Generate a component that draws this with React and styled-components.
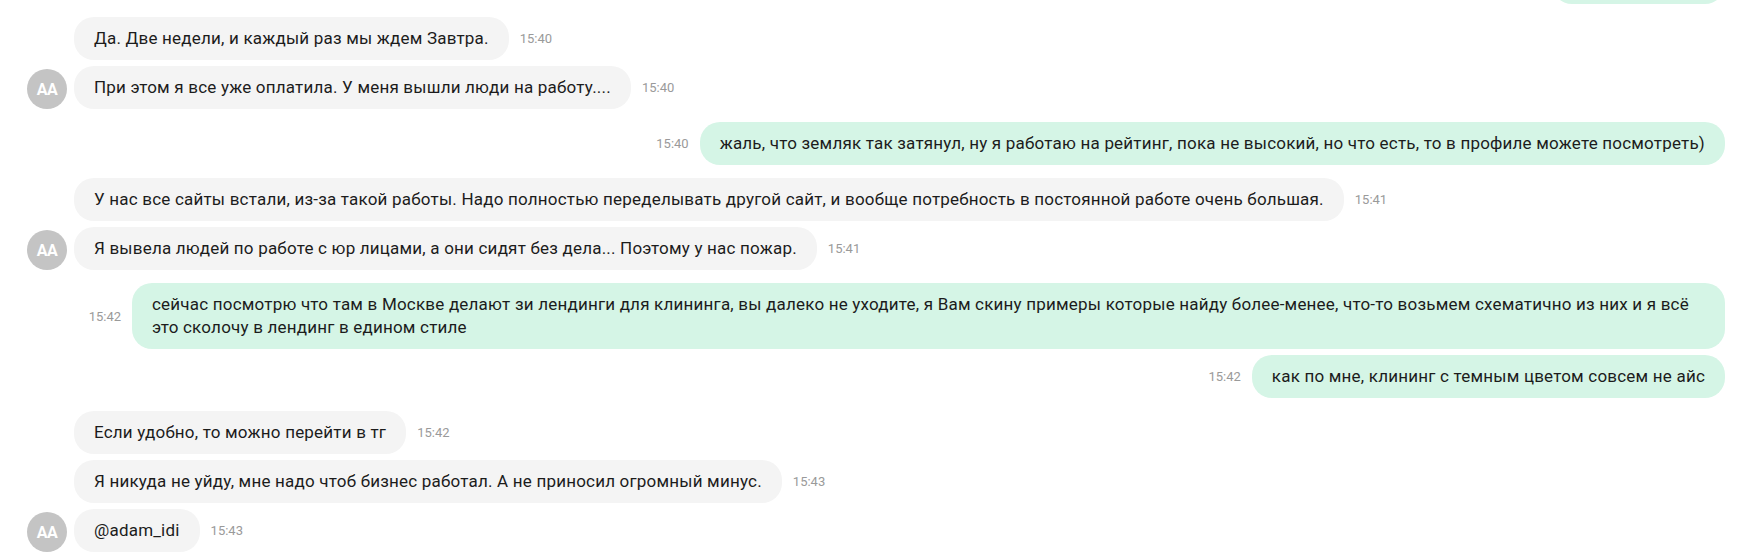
import React from "react";
import styled, { createGlobalStyle } from "styled-components";

const GlobalStyle = createGlobalStyle`
  html, body {
    margin: 0;
    padding: 0;
    background: #ffffff;
  }
  body {
    font-family: Roboto, "Noto Sans", "Liberation Sans", sans-serif;
    color: #1c1c1c;
  }
`;

// first one is the tail of an earlier message, scrolled mostly out of view
const messages = [
  { id: 0, out: true, time: "", text: "", width: 173 },
  { id: 1, time: "15:40", text: "Да. Две недели, и каждый раз мы ждем Завтра." },
  {
    id: 2,
    time: "15:40",
    avatar: true,
    text: "При этом я все уже оплатила. У меня вышли люди на работу....",
  },
  {
    id: 3,
    out: true,
    time: "15:40",
    text: "жаль, что земляк так затянул, ну я работаю на рейтинг, пока не высокий, но что есть, то в профиле можете посмотреть)",
  },
  {
    id: 4,
    time: "15:41",
    text: "У нас все сайты встали, из-за такой работы. Надо полностью переделывать другой сайт, и вообще потребность в постоянной работе очень большая.",
  },
  {
    id: 5,
    time: "15:41",
    avatar: true,
    text: "Я вывела людей по работе с юр лицами, а они сидят без дела... Поэтому у нас пожар.",
  },
  {
    id: 6,
    out: true,
    time: "15:42",
    text: "сейчас посмотрю что там в Москве делают зи лендинги для клининга, вы далеко не уходите, я Вам скину примеры которые найду более-менее, что-то возьмем схематично из них и я всё это сколочу в лендинг в едином стиле",
  },
  {
    id: 7,
    out: true,
    time: "15:42",
    text: "как по мне, клининг с темным цветом совсем не айс",
  },
  { id: 8, time: "15:42", text: "Если удобно, то можно перейти в тг" },
  {
    id: 9,
    time: "15:43",
    text: "Я никуда не уйду, мне надо чтоб бизнес работал. А не приносил огромный минус.",
  },
  { id: 10, time: "15:43", avatar: true, text: "@adam_idi" },
];

export default function App() {
  return (
    <>
      <GlobalStyle />
      <Feed>
        {messages.map((m, i) => {
          const prev = messages[i - 1];
          const sameSender = prev && !!prev.out === !!m.out;
          return (
            <Row
              key={m.id}
              $out={m.out}
              $first={i === 0}
              $tight={sameSender}
            >
              {!m.out && (
                <AvatarSlot>{m.avatar && <Avatar>AA</Avatar>}</AvatarSlot>
              )}
              {m.out && m.time && <Time>{m.time}</Time>}
              <Bubble
                $out={m.out}
                style={m.width ? { width: m.width, height: 43 } : undefined}
              >
                {m.text}
              </Bubble>
              {!m.out && <Time>{m.time}</Time>}
            </Row>
          );
        })}
      </Feed>
    </>
  );
}

const Feed = styled.div`
  height: 559px;
  overflow: hidden;
  padding: 0 19px 0 27px;
  display: flex;
  flex-direction: column;
`;

const Row = styled.div`
  display: flex;
  align-items: center;
  justify-content: ${(p) => (p.$out ? "flex-end" : "flex-start")};
  margin-top: ${(p) => (p.$first ? "-39px" : p.$tight ? "6px" : "13px")};
  flex-shrink: 0;
`;

const AvatarSlot = styled.div`
  width: 40px;
  margin-right: 7px;
  align-self: flex-end;
  display: flex;
  flex-shrink: 0;
`;

const Avatar = styled.div`
  width: 40px;
  height: 40px;
  border-radius: 50%;
  background: #c4c4c4;
  color: #ffffff;
  display: flex;
  align-items: center;
  justify-content: center;
  font-weight: 700;
  font-size: 16px;
  letter-spacing: -0.5px;
`;

const Bubble = styled.div`
  box-sizing: border-box;
  max-width: 1593px;
  padding: 10px 20px;
  border-radius: 20px;
  font-size: 17px;
  line-height: 23px;
  letter-spacing: 0.2px;
  background: ${(p) => (p.$out ? "#d5f5e6" : "#f4f4f4")};
  color: #1c1c1c;
`;

const Time = styled.span`
  flex-shrink: 0;
  margin: 0 11px;
  font-size: 13px;
  color: #9a9a9a;
`;
